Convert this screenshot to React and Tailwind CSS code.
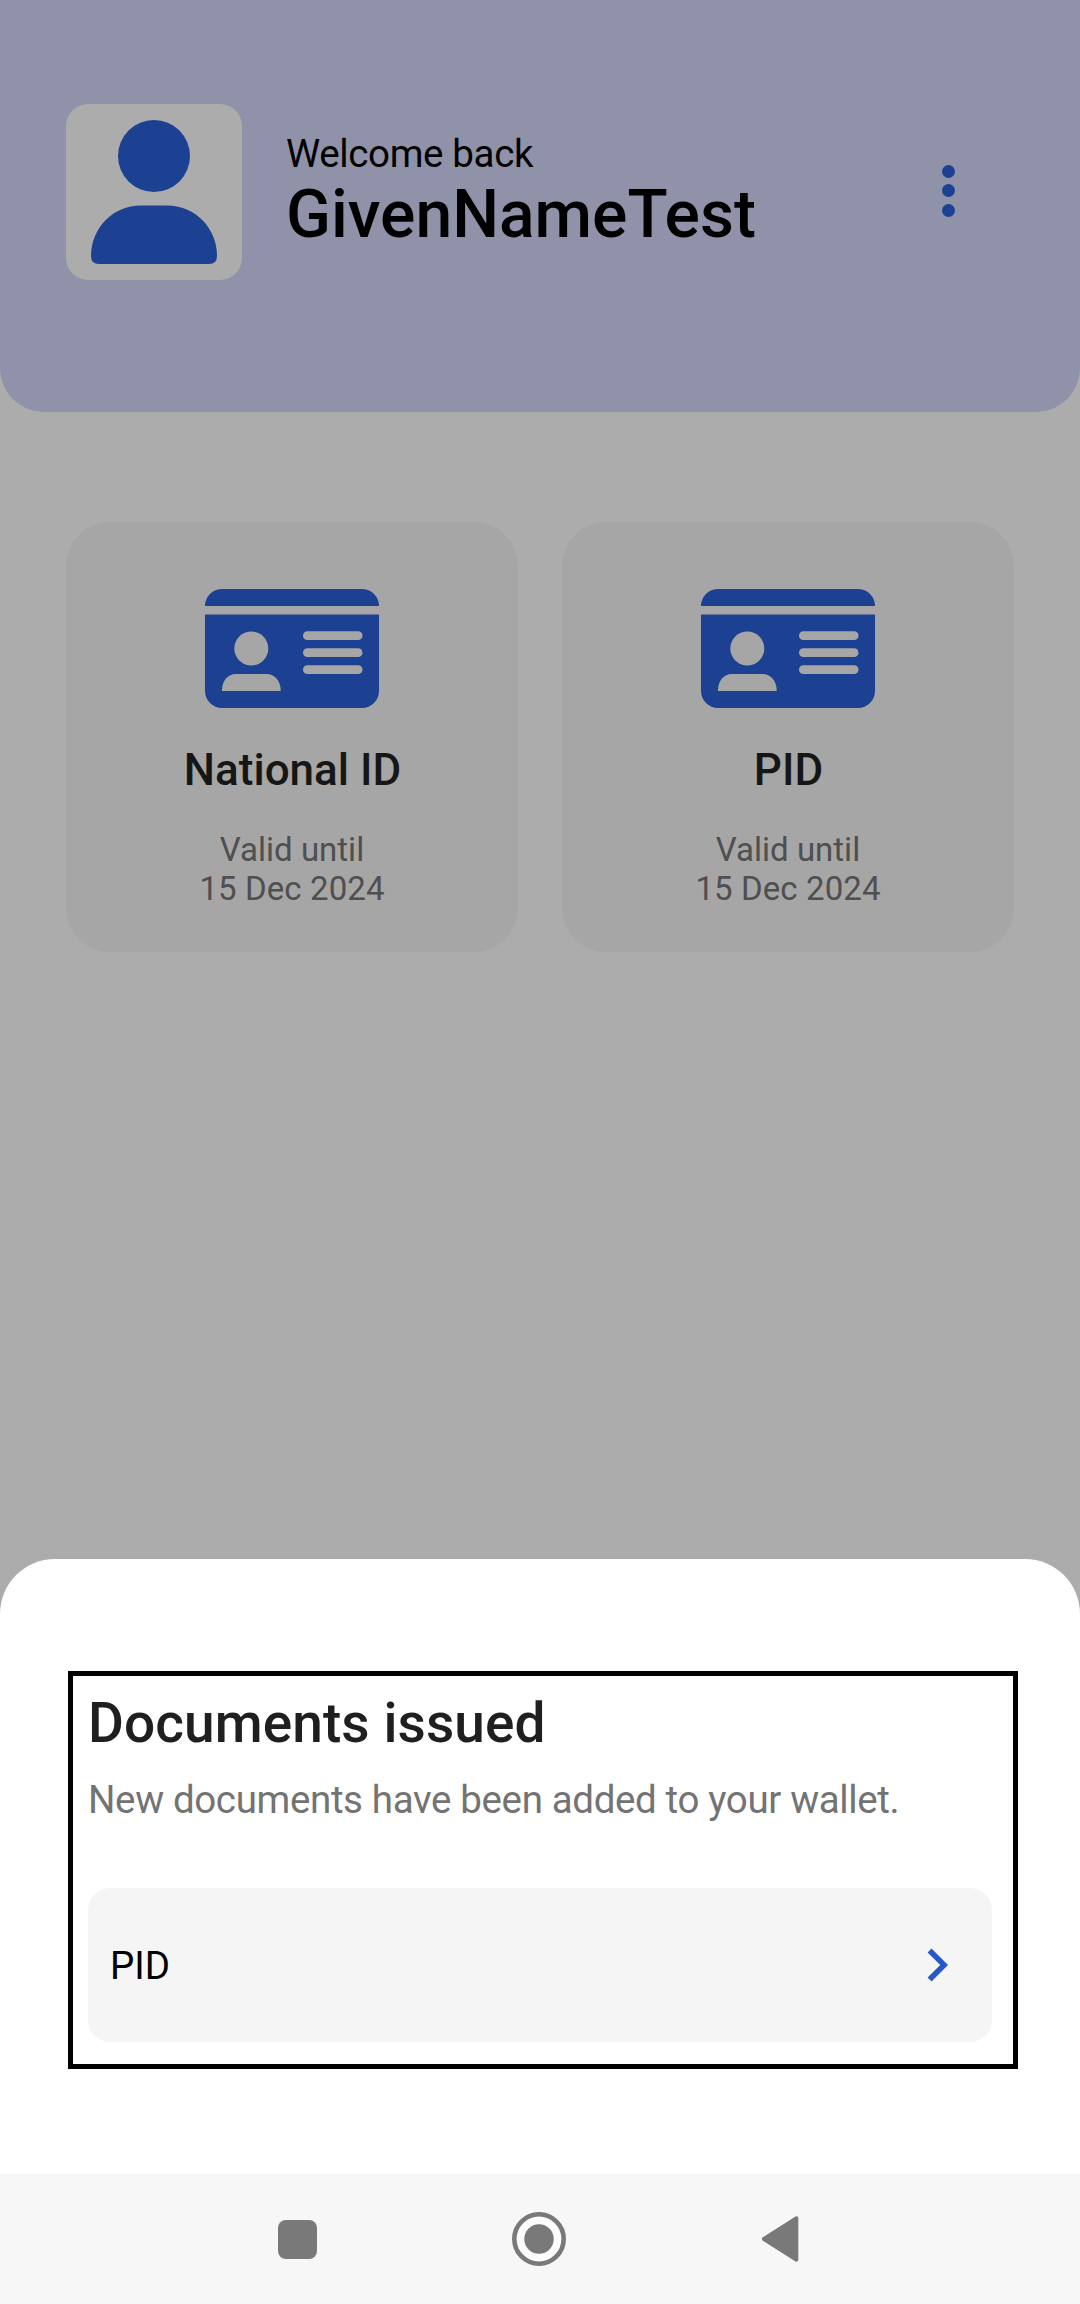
function PersonIcon() {
  return (
    <svg viewBox="0 0 176 176" className="size-[176px]" fill="#1c4193" aria-hidden="true">
      <circle cx="88" cy="52" r="36" />
      <path d="M33 160Q25 160 25 152C25 124 47 101.500 75 101.500H101C129 101.500 151 124 151 152Q151 160 143 160Z" />
    </svg>
  );
}

function IdCardIcon() {
  return (
    <svg viewBox="0 0 174 119" className="h-[119px] w-[174px]" aria-hidden="true">
      <g fill="#1c4193">
        <path d="M0 17A17 17 0 0 1 17 0H157A17 17 0 0 1 174 17Z" />
        <path d="M0 25.5H174V102A17 17 0 0 1 157 119H17A17 17 0 0 1 0 102Z" />
      </g>
      <g fill="#a6a6a6">
        <circle cx="46.3" cy="59.5" r="17" />
        <path d="M17 102C16.500 92.500 22.500 85 31 85H61.500C70 85 76 92.500 75.700 102Z" />
        <rect x="98" y="42.300" width="59.500" height="8.700" rx="4.300" />
        <rect x="98" y="59.300" width="59.500" height="8.700" rx="4.300" />
        <rect x="98" y="76.300" width="59.500" height="8.700" rx="4.300" />
      </g>
    </svg>
  );
}

function DocumentCard({ title, date }) {
  return (
    <article className="flex h-[430px] w-[452px] flex-col items-center rounded-[44px] bg-[#a6a6a6] pt-[67px] text-center">
      <IdCardIcon />
      <h2 className="mt-9 pl-px text-[44px] leading-[52px] font-medium text-[#161616]">{title}</h2>
      <p className="mt-[34px] text-[33px] leading-[39px] text-[#4f4f4f]">
        Valid until
        <br />
        <span className="tracking-[0.1px]">{date}</span>
      </p>
    </article>
  );
}

const documents = [
  { title: "National ID", date: "15 Dec 2024" },
  { title: "PID", date: "15 Dec 2024" },
];

export default function App() {
  return (
    <div className="flex h-[2304px] w-[1080px] flex-col overflow-hidden bg-[#acacac] font-['Roboto',sans-serif]">
      <header className="flex h-[412px] shrink-0 items-start rounded-b-[44px] bg-[#9092a9] pt-[104px] pl-[66px]">
        <div className="size-[176px] overflow-hidden rounded-[22px] bg-[#acacac]">
          <PersonIcon />
        </div>
        <div className="ml-11 pt-[28px] text-black">
          <p className="text-[38.5px] leading-[44px] tracking-[-0.36px]">Welcome back</p>
          <h1 className="text-[66px] leading-[77px] font-medium">GivenNameTest</h1>
        </div>
        <button className="mt-[60.5px] mr-[125px] ml-auto flex flex-col gap-[6.5px]" aria-label="Menu">
          <span className="size-[13px] rounded-full bg-[#1c4193]" />
          <span className="size-[13px] rounded-full bg-[#1c4193]" />
          <span className="size-[13px] rounded-full bg-[#1c4193]" />
        </button>
      </header>

      <main className="flex flex-1 items-start gap-11 px-[66px] pt-[110px]">
        {documents.map((doc) => (
          <DocumentCard key={doc.title} {...doc} />
        ))}
      </main>

      <section className="h-[615px] shrink-0 rounded-t-[55px] bg-white pt-[112px] pl-[68px]">
        <div className="h-[398px] w-[950px] border-[5px] border-black pt-[15px] pl-[15px]">
          <h2 className="text-[55px] leading-[64px] font-medium tracking-[0.08px] text-[#1f1f1f]">Documents issued</h2>
          <p className="mt-[22px] text-[38.5px] leading-[46px] tracking-[-0.36px] text-[#737373]">
            New documents have been added to your wallet.
          </p>
          <div className="mt-[65px] flex h-[153.5px] w-[904px] items-center justify-between rounded-[22px] bg-[#f5f5f5] px-[22px]">
            <span className="pt-0.5 text-[38.5px] leading-[46px] text-black">PID</span>
            <svg viewBox="0 0 24 24" className="size-[66px]" fill="#2758c9" aria-hidden="true">
              <path d="M10 6 8.590 7.410 13.170 12l-4.580 4.590L10 18l6-6z" />
            </svg>
          </div>
        </div>
      </section>

      <nav className="flex h-[130px] shrink-0 items-center bg-[#f7f7f7]">
        <span className="ml-[277.5px] size-[39px] rounded-[8px] bg-[#797979]" />
        <svg viewBox="0 0 54 54" className="ml-[195.5px] size-[54px]" aria-hidden="true">
          <circle cx="27" cy="27" r="24.700" fill="#fcfcfc" stroke="#797979" strokeWidth="4.600" />
          <circle cx="27" cy="27" r="14.700" fill="#797979" />
        </svg>
        <svg viewBox="0 0 37 46" className="ml-[196px] h-[46px] w-[37px]" fill="#797979" aria-hidden="true">
          <path d="M.5 21.500 33.500 .6Q36.300-.4 36.300 2.500V43.500Q36.300 46.400 33.500 45.400L.5 24.500Q-1 23 .5 21.500Z" />
        </svg>
      </nav>
    </div>
  );
}
